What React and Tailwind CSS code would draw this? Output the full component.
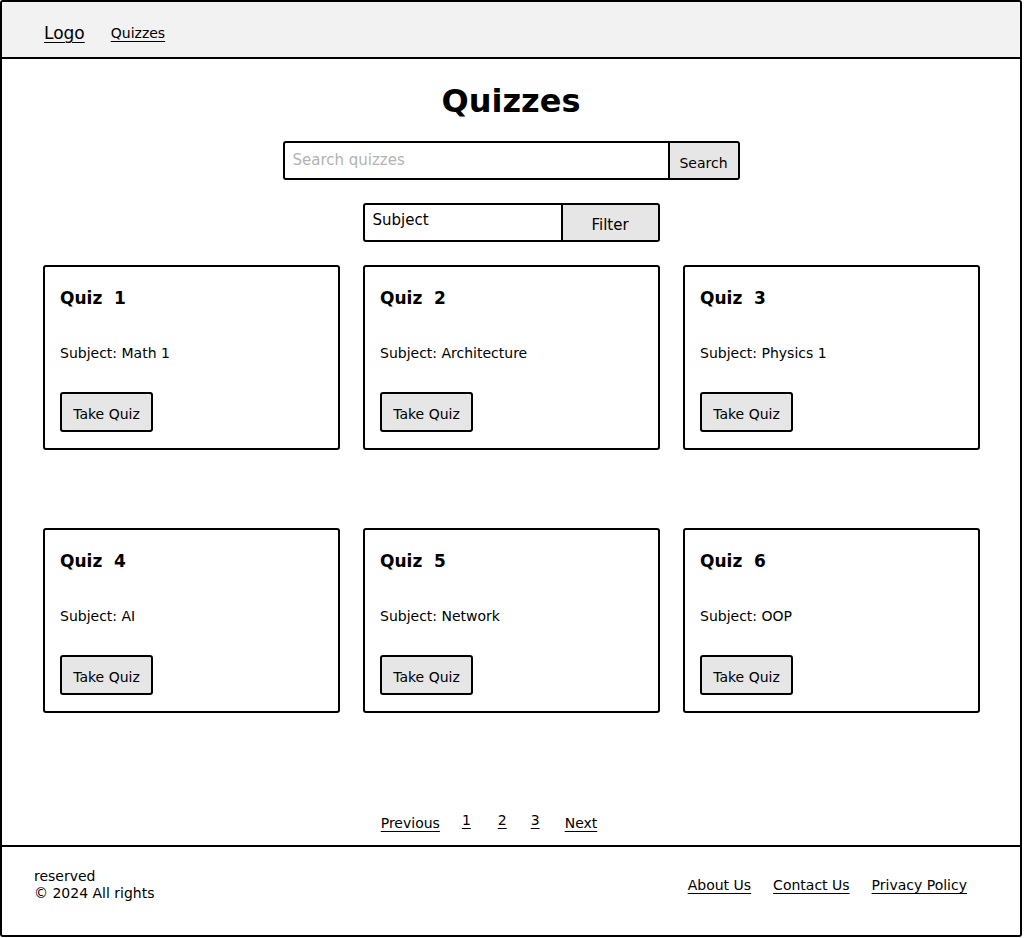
import React from "react";

const font = { fontFamily: '"Comic Sans MS", "DejaVu Sans", sans-serif' };

const quizzes = [
  { title: "Quiz 1", subject: "Math 1" },
  { title: "Quiz 2", subject: "Architecture" },
  { title: "Quiz 3", subject: "Physics 1" },
  { title: "Quiz 4", subject: "AI" },
  { title: "Quiz 5", subject: "Network" },
  { title: "Quiz 6", subject: "OOP" },
];

function Card({ q }) {
  return (
    <div className="h-[185px] border-2 border-black rounded-[3px] bg-white pt-[19px] pl-[15px] flex flex-col items-start">
      <div className="text-[17px] font-bold leading-[24px] text-black whitespace-pre">
        {q.title.replace(" ", "  ")}
      </div>
      <div className="mt-[33px] text-[14px] leading-[20px] text-black">
        Subject: {q.subject}
      </div>
      <button className="mt-[29px] w-[93px] h-[40px] border-2 border-black rounded-[3px] bg-[#e6e6e6] text-[14px] text-black pt-[5px]">
        Take Quiz
      </button>
    </div>
  );
}

export default function App() {
  return (
    <div style={font} className="w-[1024px] h-[938px] bg-white">
      <div className="w-[1022px] h-[937px] border-[2px] border-black rounded-[3px] flex flex-col overflow-hidden">
        <header className="h-[57px] shrink-0 bg-[#f2f2f2] border-b-2 border-black flex items-center pl-[42px] pt-[8px]">
          <a className="text-[17px] underline underline-offset-[3px] text-black">Logo</a>
          <a className="ml-[26px] text-[14px] underline underline-offset-[3px] text-black">Quizzes</a>
        </header>

        <main className="flex-1 flex flex-col items-center">
          <h1 className="mt-[20px] text-[32px] font-bold leading-[44px] text-black">Quizzes</h1>
          <div className="mt-[18px] flex">
            <div className="w-[387px] h-[39px] border-2 border-black rounded-l-[3px] flex items-center pl-[8px] text-[15px] text-[#b3b3b3]">
              Search quizzes
            </div>
            <button className="w-[70px] h-[39px] border-2 border-l-0 border-black rounded-r-[3px] bg-[#e6e6e6] text-[14px] text-black pt-[5px]">
              Search
            </button>
          </div>
          <div className="mt-[23px] flex">
            <div className="w-[200px] h-[39px] border-2 border-black rounded-l-[3px] flex items-center pl-[8px] pb-[4px] text-[15px] text-black">
              Subject
            </div>
            <button className="w-[97px] h-[39px] border-2 border-l-0 border-black rounded-r-[3px] bg-[#e6e6e6] text-[15px] text-black pt-[5px]">
              Filter
            </button>
          </div>

          <div className="mt-[23px] pl-[1px] grid grid-cols-[297px_297px_297px] gap-x-[23px] gap-y-[78px]">
            {quizzes.map((q) => (
              <Card key={q.title} q={q} />
            ))}
          </div>

          <div className="mt-[97px] mr-[44px] flex items-end text-[14px] text-black">
            <a className="underline underline-offset-[3px]">Previous</a>
            <a className="ml-[22px] mb-[3px] underline underline-offset-[3px]">1</a>
            <a className="ml-[27px] mb-[3px] underline underline-offset-[3px]">2</a>
            <a className="ml-[24px] mb-[3px] underline underline-offset-[3px]">3</a>
            <a className="ml-[25px] underline underline-offset-[3px]">Next</a>
          </div>
        </main>

        <footer className="h-[90px] shrink-0 border-t-2 border-black bg-white flex items-center justify-between pl-[32px] pr-[53px]">
          <div className="text-[14px] leading-[17px] text-black pb-[12px]">
            <div>reserved</div>
            <div>© 2024 All rights</div>
          </div>
          <div className="flex gap-[22px] text-[14px] text-black pb-[12px]">
            <a className="underline underline-offset-[3px]">About Us</a>
            <a className="underline underline-offset-[3px]">Contact Us</a>
            <a className="underline underline-offset-[3px]">Privacy Policy</a>
          </div>
        </footer>
      </div>
    </div>
  );
}
